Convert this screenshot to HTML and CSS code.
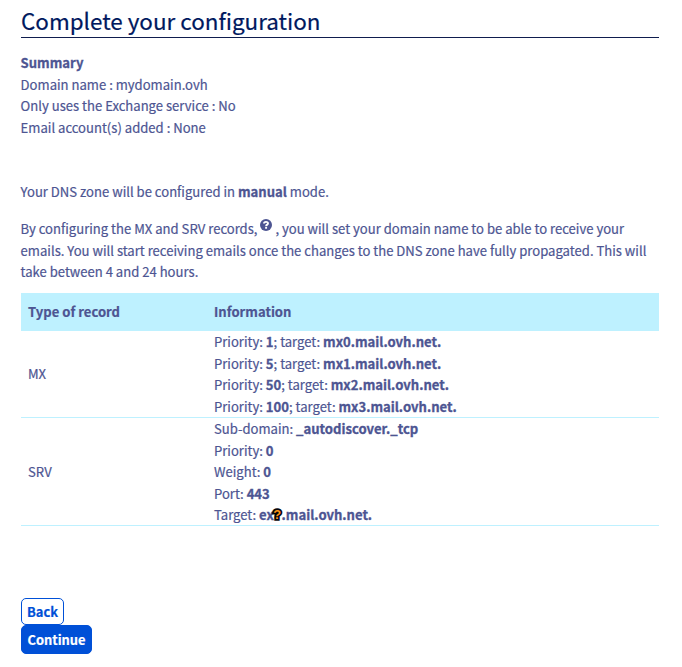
FILE: index.html
```html
<!DOCTYPE html>
<html lang="en">
<head>
<meta charset="utf-8">
<title>Complete your configuration</title>
<link rel="stylesheet" href="styles.css">
</head>
<body>
<main class="page">
  <h1 class="title">Complete your configuration</h1>
  <section class="summary">
    <strong>Summary</strong>
    <div>Domain name : mydomain.ovh</div>
    <div>Only uses the Exchange service : No</div>
    <div>Email account(s) added : None</div>
  </section>
  <p class="mode">Your DNS zone will be configured in <strong>manual</strong> mode.</p>
  <p class="notice">By configuring the MX and SRV records, <svg class="help" viewBox="0 0 12 12" aria-label="Help"><circle cx="6" cy="6" r="6" fill="#4d5592"/><path d="M4 4.6C4 2.4 8 2.3 8 4.4C8 5.7 6.1 5.6 6.1 7.2M6.1 8.1V9.8" fill="none" stroke="#fff" stroke-width="1.9"/></svg>, you will set your domain name to be able to receive your<br>emails. You will start receiving emails once the changes to the DNS zone have fully propagated. This will<br>take between 4 and 24 hours.</p>
  <table class="records">
    <thead>
      <tr><th class="type">Type of record</th><th>Information</th></tr>
    </thead>
    <tbody>
      <tr>
        <td>MX</td>
        <td>
          <div class="line">Priority: <strong>1</strong>; target: <strong>mx0.mail.ovh.net.</strong></div>
          <div class="line">Priority: <strong>5</strong>; target: <strong>mx1.mail.ovh.net.</strong></div>
          <div class="line">Priority: <strong>50</strong>; target: <strong>mx2.mail.ovh.net.</strong></div>
          <div class="line">Priority: <strong>100</strong>; target: <strong>mx3.mail.ovh.net.</strong></div>
        </td>
      </tr>
      <tr>
        <td>SRV</td>
        <td>
          <div class="line">Sub-domain: <strong>_autodiscover._tcp</strong></div>
          <div class="line">Priority: <strong>0</strong></div>
          <div class="line">Weight: <strong>0</strong></div>
          <div class="line">Port: <strong>443</strong></div>
          <div class="line">Target: <strong>ex<span class="unknown">?</span>.mail.ovh.net.</strong></div>
        </td>
      </tr>
    </tbody>
  </table>
  <div class="actions">
    <button class="btn back">Back</button>
    <button class="btn continue">Continue</button>
  </div>
</main>
</body>
</html>
```
FILE: styles.css
```css
* { box-sizing: border-box; }
body {
  margin: 0;
  background: #fff;
  color: #4d5592;
  font: 400 13.08px/21.6px "Noto Sans CJK SC", "Open Sans", sans-serif;
  -webkit-text-stroke: 0.2px currentColor;
}
.page { width: 638px; margin-left: 21px; padding-top: 6px; }
.title {
  margin: 0;
  height: 32px;
  border-bottom: 1px solid #0f1d4e;
  color: #00185e;
  font-size: 22.45px;
  font-weight: 400;
  line-height: 29px;
}
strong { font-weight: 700; -webkit-text-stroke-width: 0.3px; }
.summary { margin-top: 14px; }
.mode { margin: 43px 0 0; }
.notice { margin: 15px 0 0; white-space: nowrap; }
.summary, .mode, .notice { position: relative; left: -0.4px; }
.help { width: 12px; height: 12px; margin-right: 3px; vertical-align: 3px; }
.records {
  width: 100%;
  margin-top: 10px;
  border-collapse: collapse;
  table-layout: fixed;
}
.records th { height: 38px; padding: 0 7px; background: #bef1ff; text-align: left; }
.records .type { width: 186px; }
.records td {
  padding: 0 7px;
  border-bottom: 1px solid #bef1ff;
  line-height: 21.5px;
  vertical-align: middle;
}
.line { position: relative; top: 0.25px; }
.unknown {
  display: inline-block;
  position: relative;
  top: -1px;
  left: -0.5px;
  z-index: 1;
  width: 7.8px;
  height: 10px;
  color: #ff9417;
  font: 700 13px/10px "Liberation Sans", sans-serif;
  -webkit-text-stroke: 3.6px #05050a;
  paint-order: stroke fill;
}
.actions { display: flex; flex-direction: column; align-items: flex-start; margin-top: 72px; }
.btn {
  padding: 0;
  border: 1px solid #0050d7;
  border-radius: 5px;
  font: inherit;
  font-size: 12.9px;
  font-weight: 700;
}
.back { width: 43px; height: 27px; background: #fff; color: #0050d7; }
.continue { width: 71px; height: 29px; background: #0050d7; color: #fff; }
```
